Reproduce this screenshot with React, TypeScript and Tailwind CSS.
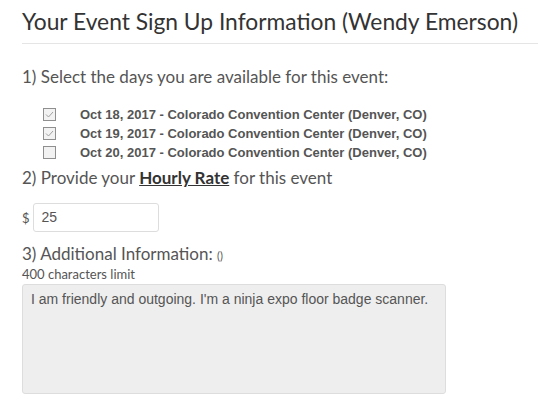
const DAYS = [
  { label: "Oct 18, 2017 - Colorado Convention Center (Denver, CO)", checked: true },
  { label: "Oct 19, 2017 - Colorado Convention Center (Denver, CO)", checked: true },
  { label: "Oct 20, 2017 - Colorado Convention Center (Denver, CO)", checked: false },
];

function Box({ checked }: { checked: boolean }) {
  return (
    <span className="flex h-[13px] w-[13px] items-center justify-center border border-[#8f8f8f] bg-[#f2f2f2]">
      {checked && (
        <svg width="9" height="7" viewBox="0 0 9 7" fill="none">
          <path d="M1 3.5 L3.5 6 L8 1" stroke="#a0a0a0" strokeWidth="1" />
        </svg>
      )}
    </span>
  );
}

export default function App() {
  return (
    <div className="min-h-[413px] bg-white pl-[22px] font-['Lato',sans-serif] text-[#555]">
      {/* ── Title ── */}
      <h1 className="pt-[8px] text-[22.8px] leading-[27px] text-[#333]">
        Your Event Sign Up Information (Wendy Emerson)
      </h1>
      <div className="mt-[8px] h-px bg-[#e5e5e5]" />

      {/* ── Days ── */}
      <p className="mt-[22px] text-[17px] leading-[21px]">
        1) Select the days you are available for this event:
      </p>
      <div className="mt-[18px] flex flex-col">
        {DAYS.map((d) => (
          <label key={d.label} className="flex h-[19px] items-center">
            <span className="ml-[21px] mr-[24px]">
              <Box checked={d.checked} />
            </span>
            <span className="font-['Liberation_Sans',sans-serif] text-[13px] font-bold">
              {d.label}
            </span>
          </label>
        ))}
      </div>

      {/* ── Rate ── */}
      <p className="mt-[5px] text-[17px] leading-[21px]">
        2) Provide your{" "}
        <span className="font-bold text-[#333] underline">Hourly Rate</span> for
        this event
      </p>
      <div className="mt-[15px] flex items-end">
        <span className="mb-[4px] mr-[3px] text-[13px]">$</span>
        <div className="flex h-[29px] w-[126px] items-center rounded-[3px] border border-[#ddd] px-[8px] font-['Liberation_Sans',sans-serif] text-[14px] text-[#555]">
          25
        </div>
      </div>

      {/* ── Additional info ── */}
      <p className="mt-[11px] text-[17px] leading-[21px]">
        3) Additional Information: <span className="text-[11px]">()</span>
      </p>
      <p className="text-[13px] leading-[17px]">400 characters limit</p>
      <div className="mt-px h-[110px] w-[424px] rounded-[3px] border border-[#ddd] bg-[#eee] px-[8px] py-[4px] font-['Liberation_Sans',sans-serif] text-[14px] leading-[20px] text-[#555]">
        I am friendly and outgoing. I'm a ninja expo floor badge scanner.
      </div>
    </div>
  );
}
